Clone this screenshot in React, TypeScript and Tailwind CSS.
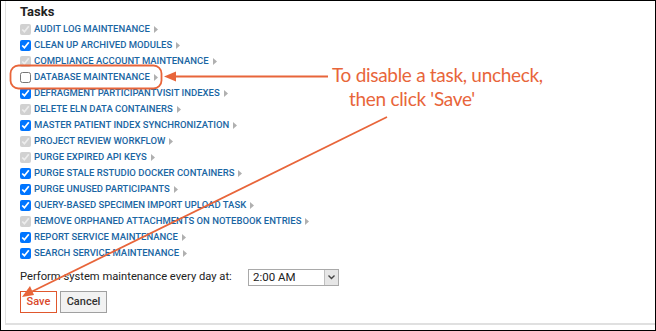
import React from "react";

const tasks: { label: string; state: "checked" | "disabled" | "unchecked" }[] = [
  { label: "AUDIT LOG MAINTENANCE", state: "disabled" },
  { label: "CLEAN UP ARCHIVED MODULES", state: "checked" },
  { label: "COMPLIANCE ACCOUNT MAINTENANCE", state: "disabled" },
  { label: "DATABASE MAINTENANCE", state: "unchecked" },
  { label: "DEFRAGMENT PARTICIPANTVISIT INDEXES", state: "checked" },
  { label: "DELETE ELN DATA CONTAINERS", state: "disabled" },
  { label: "MASTER PATIENT INDEX SYNCHRONIZATION", state: "checked" },
  { label: "PROJECT REVIEW WORKFLOW", state: "disabled" },
  { label: "PURGE EXPIRED API KEYS", state: "disabled" },
  { label: "PURGE STALE RSTUDIO DOCKER CONTAINERS", state: "checked" },
  { label: "PURGE UNUSED PARTICIPANTS", state: "checked" },
  { label: "QUERY-BASED SPECIMEN IMPORT UPLOAD TASK", state: "checked" },
  { label: "REMOVE ORPHANED ATTACHMENTS ON NOTEBOOK ENTRIES", state: "disabled" },
  { label: "REPORT SERVICE MAINTENANCE", state: "checked" },
  { label: "SEARCH SERVICE MAINTENANCE", state: "checked" },
];

export default function App() {
  return (
    <div className="relative w-[656px] h-[331px] bg-white border border-black overflow-hidden font-['Roboto',sans-serif]">
      <div className="ml-[4px] h-[324px] border-l border-b-2 border-[#e0e0e0] pl-[14px] pt-[3px]">
        <div className="text-[13px] font-bold text-[#222] leading-[16px] h-[17px]">Tasks</div>
        <div className="flex flex-col">
          {tasks.map((t) => (
            <div key={t.label} className="flex items-center h-[16px] whitespace-nowrap">
              <input
                type="checkbox"
                readOnly
                checked={t.state !== "unchecked"}
                disabled={t.state === "disabled"}
                className="m-0 w-[11px] h-[11px]"
              />
              <span className="ml-[3px] text-[9.5px] font-medium text-[#1a66a3] leading-[16px]">
                {t.label}
              </span>
              <svg width="4" height="7" viewBox="0 0 4 7" className="ml-[4px] mt-[1px]">
                <path d="M0 0 L4 3.5 L0 7 Z" fill="#b0b0b0" />
              </svg>
            </div>
          ))}
        </div>
        <div className="flex items-center mt-[7px] h-[18px] whitespace-nowrap">
          <span className="text-[11.2px] text-[#222] w-[228px] flex-none">Perform system maintenance every day at:</span>
          <div className="flex h-[17px] w-[91px] flex-none border border-[#a9a9a9] bg-white">
            <span className="flex-1 text-[11.5px] text-[#222] leading-[15px] pl-[4px]">2:00 AM</span>
            <div className="w-[14px] border-l border-[#c0c0c0] bg-[#e6e6e6] flex items-center justify-center">
              <svg width="7" height="5" viewBox="0 0 7 5">
                <path d="M0.5 0.5 L3.5 3.5 L6.5 0.5" stroke="#444" strokeWidth="1.4" fill="none" />
              </svg>
            </div>
          </div>
        </div>
        <div className="flex gap-[3px] mt-[5px]">
          <button className="w-[37px] h-[22px] border border-[#e0572d] bg-white text-[11px] font-medium text-[#d9482b]">
            Save
          </button>
          <button className="w-[47px] h-[22px] border border-[#a0a0a0] bg-[#f2f2f2] text-[11px] font-medium text-[#333]">
            Cancel
          </button>
        </div>
      </div>

      {/* annotation */}
      <svg className="absolute left-0 top-0" width="656" height="331" viewBox="0 0 656 331">
        <rect x="9.5" y="64.5" width="151" height="23" rx="8" fill="none" stroke="#e8653a" strokeWidth="1.8" />
        <line x1="327" y1="75.5" x2="172" y2="75.5" stroke="#e8653a" strokeWidth="1.8" />
        <path d="M163 75.5 L175 70.5 L175 80.5 Z" fill="#e8653a" />
        <line x1="386" y1="116" x2="30" y2="291" stroke="#e8653a" strokeWidth="1.8" />
        <path d="M21 296 L29 285 L33 294 Z" fill="#e8653a" />
      </svg>
      <div className="absolute left-[331px] top-[62px] text-[19px] leading-[24px] text-[#e8653a] font-['Lato',sans-serif] whitespace-nowrap tracking-[-0.3px]">
        <div>To disable a task, uncheck,</div>
        <div className="pl-[17px]">then click 'Save'</div>
      </div>
    </div>
  );
}
